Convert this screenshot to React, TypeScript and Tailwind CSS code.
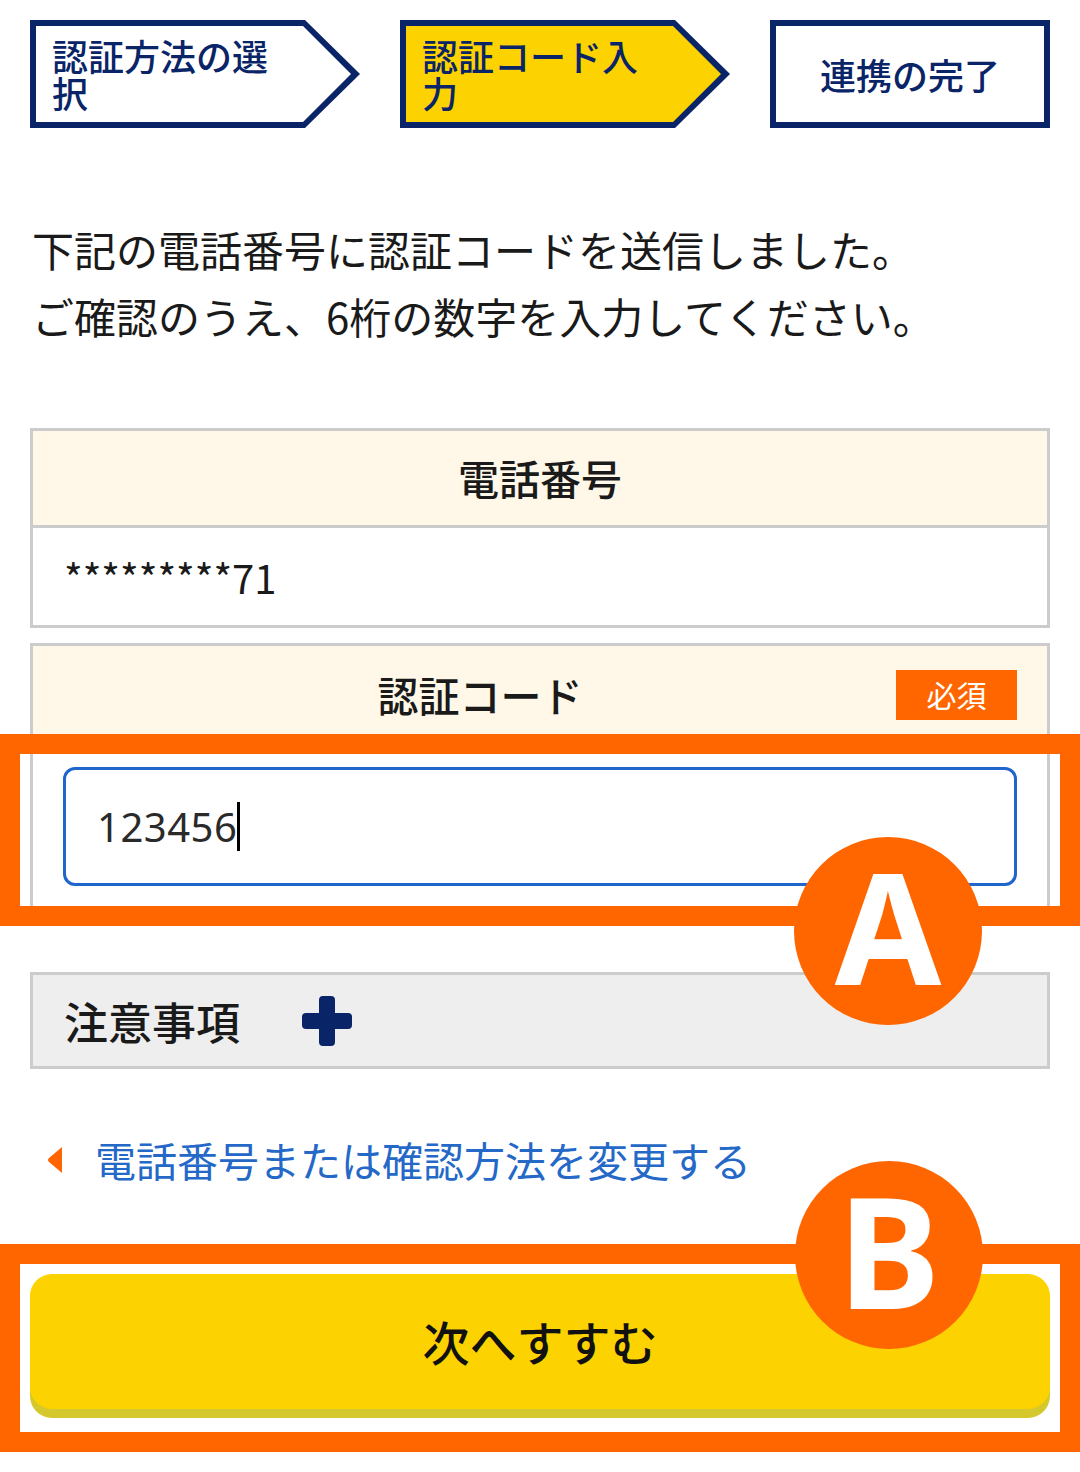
import type { FC } from 'react';

const NAVY = 'text-[#0a2468]';

interface StepArrowProps {
  label: string;
  active?: boolean;
}

const StepArrow: FC<StepArrowProps> = ({ label, active }) => {
  return (
    <div className="w-[330px] h-[108px] shrink-0 bg-[#0a2468] pt-[6px] pb-[6px] pl-[6px] pr-[9px] [clip-path:polygon(0_0,calc(100%_-_55px)_0,100%_50%,calc(100%_-_55px)_100%,0_100%)]">
      <div
        className={`h-full flex items-center pl-[16px] [clip-path:polygon(0_0,calc(100%_-_48px)_0,100%_50%,calc(100%_-_48px)_100%,0_100%)] ${
          active ? 'bg-[#fcd200]' : 'bg-white'
        }`}
      >
        <p className={`w-[230px] text-[36px] leading-[37px] font-medium ${NAVY}`}>
          {label}
        </p>
      </div>
    </div>
  );
};

const PlusIcon: FC = () => (
  <svg width="50" height="50" viewBox="0 0 50 50">
    <rect x="17" y="0" width="16" height="50" rx="4" fill="#0a2468" />
    <rect x="0" y="17" width="50" height="16" rx="4" fill="#0a2468" />
  </svg>
);

const BackTriangle: FC = () => (
  <svg width="16" height="28" viewBox="0 0 16 28">
    <path d="M15 1 L2 12 Q0 14 2 16 L15 27 Z" fill="#ff6600" />
  </svg>
);

export default function App() {
  return (
    <div className="relative w-[1080px] h-[1472px] bg-white overflow-hidden font-['Noto_Sans_CJK_JP','Noto_Sans',sans-serif] text-[#1a1a1a]">
      <div className="px-[30px] pt-[20px]">
        {/* steps */}
        <div className="flex gap-[40px]">
          <StepArrow label="認証方法の選択" />
          <StepArrow label="認証コード入力" active />
          <div className="w-[280px] h-[108px] border-[6px] border-[#0a2468] bg-white flex items-center justify-center">
            <p className={`text-[36px] leading-[37px] font-medium ${NAVY}`}>連携の完了</p>
          </div>
        </div>

        <p className="mt-[87px] text-[42px] leading-[67px] pl-[2px]">
          下記の電話番号に認証コードを送信しました。
          <br />
          ご確認のうえ、6桁の数字を入力してください。
        </p>

        {/* phone number */}
        <div className="mt-[79px] border-[3px] border-[#cccccc]">
          <div className="h-[97px] bg-[#fff7e7] border-b-[3px] border-[#cccccc] flex items-center justify-center">
            <h3 className="text-[41px] font-medium">電話番号</h3>
          </div>
          <div className="h-[97px] bg-white flex items-center pl-[31px]">
            <p className="text-[40px]">*********71</p>
          </div>
        </div>

        {/* code input */}
        <div className="mt-[15px] border-[3px] border-[#cccccc]">
          <div className="h-[97px] bg-[#fff7e7] flex items-center pr-[30px]">
            <h3 className="flex-1 text-center pl-[31px] text-[41px] font-medium">認証コード</h3>
            <span className="w-[121px] h-[50px] bg-[#ff6600] text-white text-[30px] flex items-center justify-center">
              必須
            </span>
          </div>
          <div className="bg-white px-[30px] py-[24px]">
            <div className="h-[119px] border-[3px] border-[#1e66cc] rounded-[12px] flex items-center pl-[31px]">
              <span className="font-['Noto_Sans',sans-serif] text-[40px] text-[#2a2a2a] tracking-[0.5px]">123456</span>
              <span className="inline-block w-[3px] h-[49px] bg-black" />
            </div>
          </div>
        </div>

        {/* notes */}
        <div className="mt-[59px] h-[97px] border-[3px] border-[#cccccc] bg-[#eeeeee] flex items-center pl-[31px] gap-[62px]">
          <h3 className="text-[44px] font-medium">注意事項</h3>
          <PlusIcon />
        </div>

        <a className="mt-[61px] h-[60px] flex items-center pl-[17px] gap-[32px] cursor-pointer">
          <BackTriangle />
          <span className="text-[41px] text-[#2468c8]">電話番号または確認方法を変更する</span>
        </a>

        <button className="mt-[84px] w-full h-[135px] rounded-[22px] bg-[#fcd200] shadow-[0_9px_0_#d5c82c] flex items-center justify-center text-[47px] font-medium text-[#111]">
          次へすすむ
        </button>
      </div>

      {/* annotations */}
      <div className="absolute left-0 top-[734px] w-[1080px] h-[192px] border-[20px] border-[#ff6600]" />
      <div className="absolute left-[794px] top-[837px] w-[188px] h-[188px] rounded-full bg-[#ff6600] flex items-center justify-center pb-[12px]">
        <span className="font-['Noto_Sans',sans-serif] text-[154px] leading-none font-bold text-white">A</span>
      </div>
      <div className="absolute left-0 top-[1244px] w-[1080px] h-[208px] border-[20px] border-[#ff6600]" />
      <div className="absolute left-[795px] top-[1161px] w-[188px] h-[188px] rounded-full bg-[#ff6600] flex items-center justify-center pb-[12px]">
        <span className="font-['Noto_Sans',sans-serif] text-[154px] leading-none font-bold text-white">B</span>
      </div>
    </div>
  );
}
